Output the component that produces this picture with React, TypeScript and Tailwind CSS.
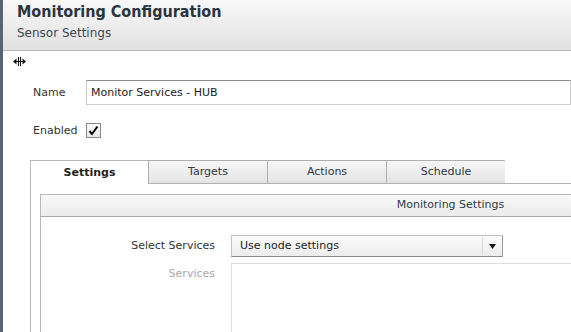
import React from "react";

const font = { fontFamily: '"DejaVu Sans", Verdana, sans-serif' };
const condensed = { fontFamily: '"DejaVu Sans Condensed", "DejaVu Sans", sans-serif' };

function ResizeIcon() {
    return (
        <svg width="13" height="9" viewBox="0 0 13 9">
            <path d="M0 4.5 L3.5 1.5 L3.5 7.5 Z" fill="#111" />
            <path d="M13 4.5 L9.5 1.5 L9.5 7.5 Z" fill="#111" />
            <rect x="3" y="4" width="7" height="1" fill="#111" />
            <rect x="5" y="0" width="1" height="9" fill="#111" />
            <rect x="7" y="0" width="1" height="9" fill="#111" />
        </svg>
    );
}

function Tab({ label, active }: { label: string; active?: boolean }) {
    if (active) {
        return (
            <div className="w-[118px] h-[24px] border-t border-l border-[#b8b8b8] bg-white flex items-center justify-center text-[11px] font-bold text-[#222] pt-[1px]">
                {label}
            </div>
        );
    }
    return (
        <div className="w-[119px] h-[24px] border-t border-l border-b border-[#b0b0b0] bg-gradient-to-b from-[#f7f7f7] to-[#e4e4e4] flex items-center justify-center text-[11px] text-[#2e3a44]">
            {label}
        </div>
    );
}

export default function App() {
    return (
        <div className="w-[571px] h-[332px] overflow-hidden flex bg-white" style={font}>
            <div className="w-[3px] shrink-0 bg-[#5c6272]" />
            <div className="flex-1 flex flex-col min-w-0 overflow-hidden">
                <div className="h-[51px] shrink-0 border-b border-[#b4b4b4] bg-gradient-to-b from-[#f8f8f8] to-[#e1e1e1] pl-[14px] pt-[1px]">
                    <div className="text-[16px] font-bold text-[#2a3540] leading-[22px]" style={condensed}>Monitoring Configuration</div>
                    <div className="text-[12px] text-[#3a4856] leading-[16px] mt-[2px]">Sensor Settings</div>
                </div>
                <div className="shrink-0 pl-[10px] pt-[6px] h-[29px]">
                    <ResizeIcon />
                </div>
                <div className="shrink-0 flex items-center h-[25px]">
                    <div className="w-[83px] pl-[30px] text-[11px] text-[#333] pt-[2px]">Name</div>
                    <div className="flex-1 h-[25px] border border-[#cccccc] border-t-[#8c8c8c] flex items-center pl-[4px] pt-[1px] text-[11px] text-[#222] whitespace-nowrap">
                        Monitor Services - HUB
                    </div>
                </div>
                <div className="shrink-0 flex items-center mt-[18px] h-[15px]">
                    <div className="w-[83px] pl-[30px] text-[11px] text-[#333] pt-[1px]">Enabled</div>
                    <div className="w-[15px] h-[15px] border border-[#8a8a8a] bg-gradient-to-b from-[#fdfdfd] to-[#e6e6e6] flex items-center justify-center">
                        <svg width="11" height="11" viewBox="0 0 11 11">
                            <path d="M1.5 6 L4 9 L9.5 1.5" stroke="#000" strokeWidth="2" fill="none" />
                        </svg>
                    </div>
                </div>
                <div className="shrink-0 mt-[22px] ml-[27px] flex flex-col h-[172px]">
                    <div className="flex shrink-0">
                        <Tab label="Settings" active />
                        <Tab label="Targets" />
                        <Tab label="Actions" />
                        <Tab label="Schedule" />
                        <div className="flex-1 border-b border-[#b0b0b0]" />
                    </div>
                    <div className="flex-1 border-l border-[#b8b8b8] pl-[9px] pt-[10px]">
                        <div className="w-[820px] h-full border-l border-t border-[#b8b8b8]">
                            <div className="h-[22px] border-b border-[#a8a8a8] bg-gradient-to-b from-[#f9f9f9] to-[#ebebeb] flex items-center justify-center text-[11px] text-[#2e3a44]">
                                Monitoring Settings
                            </div>
                            <div className="flex items-center mt-[18px]">
                                <div className="w-[174px] text-right text-[11px] text-[#333]">Select Services</div>
                                <div className="ml-[16px] w-[272px] h-[22px] border border-[#c4c4c4] border-b-[#8a8a8a] border-r-[#9a9a9a] bg-gradient-to-b from-[#fbfbfb] to-[#ececec] flex items-center">
                                    <div className="flex-1 pl-[8px] text-[11px] text-[#222]">Use node settings</div>
                                    <div className="w-[20px] h-[18px] border-l border-[#d8d8d8] flex items-center justify-center">
                                        <svg width="7" height="5" viewBox="0 0 7 5">
                                            <path d="M0 0 H7 L3.5 5 Z" fill="#111" />
                                        </svg>
                                    </div>
                                </div>
                            </div>
                            <div className="flex items-start mt-[6px]">
                                <div className="w-[174px] text-right text-[11px] text-[#aaaaaa] pt-[3px]">Services</div>
                                <div className="ml-[16px] flex-1 h-[80px] border-l border-t border-[#dddddd]" />
                            </div>
                        </div>
                    </div>
                </div>
            </div>
        </div>
    );
}
